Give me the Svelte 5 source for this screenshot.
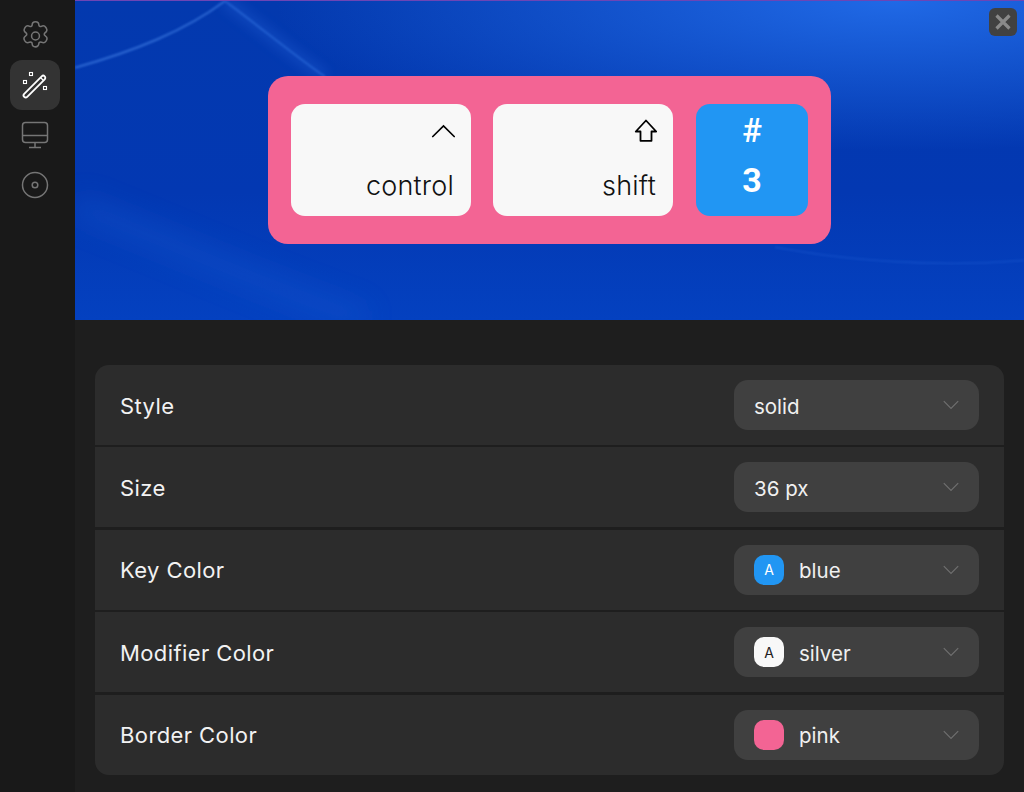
<script>
    const rows = [
        { label: 'Style', value: 'solid' },
        { label: 'Size', value: '36 px' },
        { label: 'Key Color', value: 'blue', swatch: 'blue', letter: 'A' },
        { label: 'Modifier Color', value: 'silver', swatch: 'silver', letter: 'A' },
        { label: 'Border Color', value: 'pink', swatch: 'pink' }
    ];
</script>

<div class="app">
    <nav class="sidebar">
        <button class="nav-item" aria-label="Settings">
            <svg viewBox="0 0 24 24" width="35" height="35" fill="none" stroke="currentColor" stroke-width="1.05" stroke-linejoin="round">
                <path d="M9.700 3.700a2.300 2.300 0 0 1 4.600 0c0 .8 1 1.300 1.700.9a2.300 2.300 0 0 1 3.100.8l.3.5a2.300 2.300 0 0 1-.8 3.100c-.8.500-.8 1.500 0 2l.1.100a2.300 2.300 0 0 1 .8 3.100l-.3.5a2.300 2.300 0 0 1-3.100.8c-.8-.4-1.800.1-1.800.9a2.300 2.300 0 0 1-4.600 0c0-.8-1-1.300-1.800-.9a2.300 2.300 0 0 1-3.100-.8l-.3-.5a2.300 2.300 0 0 1 .8-3.100l.1-.1c.8-.5.8-1.500 0-2a2.300 2.300 0 0 1-.8-3.100l.3-.5a2.300 2.300 0 0 1 3.100-.8c.8.400 1.700-.1 1.700-.9z" transform="translate(0 1.100)"/>
                <circle cx="12" cy="12.350" r="2.700"/>
            </svg>
        </button>
        <button class="nav-item active" aria-label="Effects">
            <svg viewBox="0 0 30 30" width="30" height="30" fill="none" stroke="currentColor">
                <path d="M4.200 23.800 21.700 6.300a2 2 0 0 1 3 3L7.200 26.800a2 2 0 0 1-3-3z" stroke-width="1.800"/>
                <path d="M20.500 7.500 23.500 10.500" stroke-width="1.200"/>
                <g stroke-width="1.100">
                    <rect x="9.500" y="2.500" width="3" height="3"/>
                    <rect x="3.500" y="10.500" width="3" height="3"/>
                    <rect x="23.500" y="16.500" width="3" height="3"/>
                </g>
            </svg>
        </button>
        <button class="nav-item" aria-label="Display">
            <svg viewBox="0 0 30 30" width="30" height="30" fill="none" stroke="currentColor" stroke-width="1.500">
                <rect x="2.500" y="2.500" width="25" height="20" rx="3"/>
                <path d="M2.500 15.500h25M15 22.500v5M9 27.500h12"/>
            </svg>
        </button>
        <button class="nav-item" aria-label="Record">
            <svg viewBox="0 0 30 30" width="30" height="30" fill="none" stroke="currentColor" stroke-width="1.500">
                <circle cx="15" cy="15" r="12.500"/>
                <circle cx="15" cy="15" r="2.800"/>
            </svg>
        </button>
    </nav>

    <main class="content">
        <section class="preview">
            <svg class="streaks" viewBox="0 0 949 320" preserveAspectRatio="none" fill="none">
                <defs>
                    <filter id="soft"><feGaussianBlur stdDeviation="1"/></filter>
                    <filter id="softer" x="-50%" y="-50%" width="200%" height="200%"><feGaussianBlur stdDeviation="6"/></filter>
                    <filter id="wide" x="-50%" y="-50%" width="200%" height="200%"><feGaussianBlur stdDeviation="14"/></filter>
                </defs>
                <path d="M0 67C60 50 110 30 150 0" stroke="#4a88ec" stroke-width="2" opacity=".6" filter="url(#soft)"/>
                <path d="M150 0C190 30 220 55 250 76" stroke="#3a7ae6" stroke-width="1.800" opacity=".6" filter="url(#soft)"/>
                <path d="M150 0C190 30 220 55 250 76" stroke="#2a68dc" stroke-width="12" opacity=".3" filter="url(#softer)"/>
                <path d="M0 205C90 240 200 290 290 320" stroke="#1a5ed4" stroke-width="20" opacity=".35" filter="url(#wide)"/>
                <path d="M700 247C770 260 860 268 949 260" stroke="#2f6fe0" stroke-width="1.500" opacity=".3" filter="url(#soft)"/>
            </svg>
            <button class="close" aria-label="Close">
                <svg viewBox="0 0 28 28" width="28" height="28" fill="none" stroke="#8a8a8a" stroke-width="3.200">
                    <path d="M7.500 7.500l13 13M20.500 7.500l-13 13"/>
                </svg>
            </button>
            <div class="keys">
                <div class="key modifier">
                    <svg class="glyph" viewBox="0 0 24 24" width="24" height="24" fill="none" stroke="#000" stroke-width="1.700" stroke-linecap="round">
                        <path d="M1.800 18.500 12.500 8l10.700 10.500"/>
                    </svg>
                    <span class="key-name">control</span>
                </div>
                <div class="key modifier">
                    <svg class="glyph" viewBox="0 0 24 24" width="24" height="24" fill="none" stroke="#000" stroke-width="1.800" stroke-linejoin="round">
                        <path d="M13 2.500 2.800 13.500H7.500V22.800H18.500V13.500H23.200Z"/>
                    </svg>
                    <span class="key-name">shift</span>
                </div>
                <div class="key main">
                    <span class="hash">#</span>
                    <span class="digit">3</span>
                </div>
            </div>
        </section>

        <section class="panel">
            {#each rows as row}
                <div class="row">
                    <span class="label">{row.label}</span>
                    <div class="select">
                        {#if row.swatch}
                            <span class="swatch {row.swatch}">{row.letter ?? ''}</span>
                        {/if}
                        <span class="value">{row.value}</span>
                        <svg class="chevron" viewBox="0 0 16 10" width="16" height="10" fill="none" stroke="#6f6f6f" stroke-width="1.200">
                            <path d="M.8 1.200 8 8.400l7.200-7.200"/>
                        </svg>
                    </div>
                </div>
            {/each}
        </section>
    </main>
</div>

<style>
    :global(body) {
        margin: 0;
        background: #1c1c1c;
    }

    .app {
        display: flex;
        width: 1024px;
        height: 792px;
        overflow: hidden;
        font-family: "Inter", "Noto Sans", sans-serif;
    }

    .sidebar {
        display: flex;
        flex-direction: column;
        width: 75px;
        flex-shrink: 0;
        padding: 10px 0 0 10px;
        box-sizing: border-box;
        background: #191919;
    }

    .nav-item {
        display: flex;
        align-items: center;
        justify-content: center;
        width: 50px;
        height: 50px;
        padding: 0;
        border: 0;
        border-radius: 12px;
        background: none;
        color: #757575;
    }

    .nav-item.active {
        background: #333333;
        color: #ffffff;
    }

    .content {
        flex: 1;
        min-width: 0;
        background: #1e1e1e;
    }

    .preview {
        position: relative;
        display: flex;
        align-items: flex-start;
        justify-content: center;
        height: 320px;
        padding-top: 76px;
        box-sizing: border-box;
        border-top: 1px solid #6d45b5;
        background:
            radial-gradient(ellipse 620px 150px at 820px 0px, #2069e6 0%, rgba(32, 105, 230, 0) 100%),
            linear-gradient(180deg, #0339ae 0%, #0338b2 60%, #0441c0 100%);
    }

    .streaks {
        position: absolute;
        inset: 0;
        width: 100%;
        height: 100%;
    }

    .close {
        position: absolute;
        top: 7px;
        right: 7px;
        display: flex;
        width: 28px;
        height: 28px;
        padding: 0;
        border: 0;
        border-radius: 6px;
        background: #414141;
    }

    .keys {
        position: relative;
        display: flex;
        gap: 22px;
        margin-top: -1px;
        padding: 28px 23px;
        border-radius: 20px;
        background: #f36494;
    }

    .key {
        position: relative;
        display: flex;
        flex-direction: column;
        box-sizing: border-box;
        height: 112px;
        border-radius: 14px;
    }

    .modifier {
        align-items: flex-end;
        justify-content: space-between;
        width: 180px;
        padding: 14px 17px 14px;
        background: #f8f8f8;
        color: #111111;
    }

    .glyph {
        margin-right: -1px;
    }

    .main {
        align-items: center;
        width: 112px;
        margin-left: 1px;
        padding-top: 8px;
        background: #2196f3;
        color: #ffffff;
        font-family: "Roboto", sans-serif;
    }

    .key-name {
        font-size: 27px;
        font-weight: 300;
        line-height: 32px;
        letter-spacing: 0.2px;
    }

    .hash {
        font-size: 33px;
        font-weight: 500;
        line-height: 38px;
    }

    .digit {
        margin-top: 8px;
        font-size: 34px;
        font-weight: 700;
        line-height: 44px;
    }

    .panel {
        display: flex;
        flex-direction: column;
        gap: 2.4px;
        margin: 45px 20px 0;
        border-radius: 14px;
        overflow: hidden;
    }

    .row {
        display: flex;
        align-items: center;
        justify-content: space-between;
        padding: 15px 25px;
        background: #2c2c2c;
    }

    .label {
        padding-top: 1px;
        font-size: 22px;
        font-weight: 400;
        letter-spacing: 0.4px;
        color: #f2f2f2;
    }

    .select {
        display: flex;
        align-items: center;
        width: 245px;
        height: 50px;
        padding: 0 20px;
        box-sizing: border-box;
        border-radius: 14px;
        background: #404040;
        color: #f0f0f0;
        font-size: 20.5px;
    }

    .value {
        flex: 1;
        padding-top: 2px;
    }

    .swatch {
        display: flex;
        align-items: center;
        justify-content: center;
        width: 30px;
        height: 30px;
        margin-right: 15px;
        border-radius: 10px;
        font-size: 14px;
        font-weight: 400;
    }

    .swatch.blue {
        background: #2196f3;
        color: #ffffff;
    }

    .swatch.silver {
        background: #f8f8f8;
        color: #222222;
    }

    .swatch.pink {
        background: #f36494;
    }
</style>
